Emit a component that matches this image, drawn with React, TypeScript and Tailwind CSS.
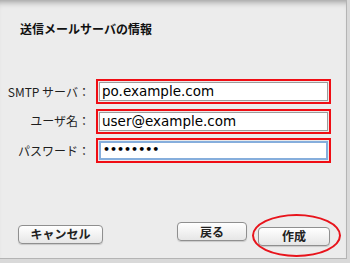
import React from 'react';

const jp = { fontFamily: '"Noto Sans CJK JP", "Noto Sans", sans-serif' };

const Field: React.FC<{ label: string; value: string; focused?: boolean; password?: boolean }> = ({
  label,
  value,
  focused,
  password,
}) => (
  <div className="flex items-center">
    <div className="w-[96px] shrink-0 pr-[6px] text-right text-[12px] leading-none text-[#1e1e1e]">{label}</div>
    <div className="h-[25px] w-[235px] border-2 border-[#f00d14] p-[1px] bg-[#e9e9e9]">
      <div
        className={`flex h-full items-center bg-white pl-[2px] ${
          focused ? 'border-2 border-[#86aedc]' : 'border border-[#9c9c9c]'
        }`}
      >
        <span
          className={`text-black ${password ? 'text-[11px] font-bold' : 'text-[13.5px]'}`}
          style={{ fontFamily: '"DejaVu Sans", sans-serif' }}
        >
          {value}
        </span>
      </div>
    </div>
  </div>
);

const Button: React.FC<{ label: string; w: string }> = ({ label, w }) => (
  <button
    className={`${w} h-[19px] rounded-[4px] border border-[#8f8f8f] bg-gradient-to-b from-white to-[#e6e6e6] text-[12px] leading-none font-semibold text-[#222] shadow-[0_1px_1px_rgba(0,0,0,0.15)]`}
  >
    {label}
  </button>
);

const App: React.FC = () => {
  return (
    <div className="h-[263px] w-[350px] overflow-hidden bg-[#d9d9d9]" style={jp}>
      <div className="flex h-[259px] w-[347px] flex-col border-r border-b border-[#b4b4b4] bg-[#ececec] shadow-[inset_0_7px_6px_-5px_rgba(0,0,0,0.35)]">
        <h1 className="pl-[20px] pt-[21px] text-[12px] leading-[16px] font-bold text-[#111]">送信メールサーバの情報</h1>

        <div className="mt-[42px] flex flex-col gap-[4.5px]">
          <Field label="SMTP サーバ：" value="po.example.com" />
          <Field label="ユーザ名：" value="user@example.com" />
          <Field label="パスワード：" value="••••••••" focused password />
        </div>

        <div className="mt-[59px] flex items-center pl-[18px] pr-[16px]">
          <Button label="キャンセル" w="w-[85px]" />
          <div className="ml-auto flex gap-[11px]">
            <Button label="戻る" w="w-[70px]" />
            <div className="relative">
              <Button label="作成" w="w-[72px]" />
              <div className="absolute left-[-6px] top-[-8px] h-[43px] w-[89px] rounded-[50%] border-2 border-[#e8141c]" />
            </div>
          </div>
        </div>
      </div>
    </div>
  );
};

export default App;
